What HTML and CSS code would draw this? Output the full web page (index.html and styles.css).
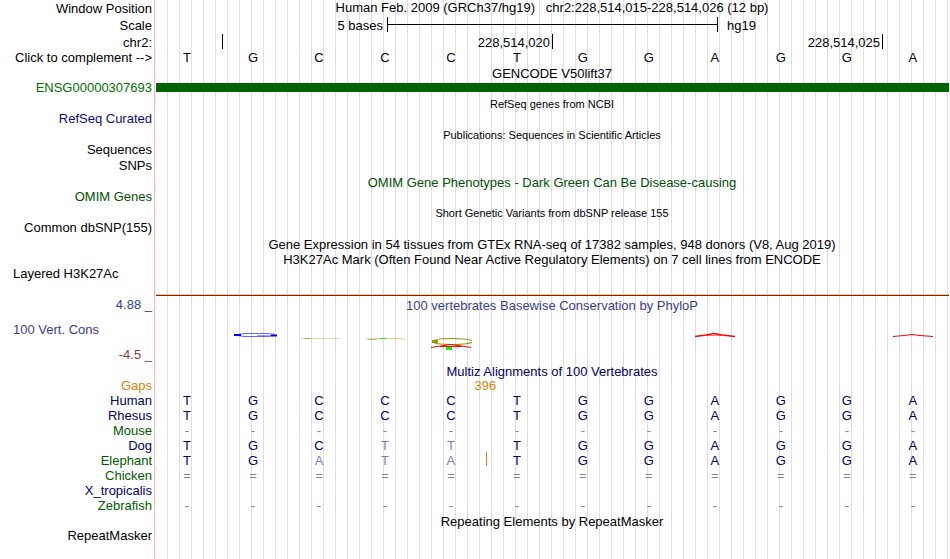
FILE: index.html
```
<!DOCTYPE html>
<html lang="en">
<head>
    <meta charset="UTF-8">
    <meta name="viewport" content="width=device-width, initial-scale=1.0">
    <title>Human chr2:228,514,015-228,514,026</title>
    <link rel="stylesheet" href="styles.css">
</head>
<body>

<table class="browser">
    <colgroup>
        <col class="col-label">
        <col span="12">
        <col class="col-end">
    </colgroup>
    <tbody>
        <!-- position and ruler -->
        <tr class="ruler">
            <th>Window Position</th>
            <td colspan="13" class="title position">Human Feb. 2009 (GRCh37/hg19) &nbsp; chr2:228,514,015-228,514,026 (12 bp)</td>
        </tr>
        <tr class="ruler">
            <th>Scale</th>
            <td colspan="13">
                <div class="scale">
                    <span class="scale-size">5 bases</span>
                    <span class="scale-bar"></span>
                    <span class="scale-db">hg19</span>
                </div>
            </td>
        </tr>
        <tr class="ruler">
            <th>chr2:</th>
            <td colspan="13">
                <div class="ticks">
                    <span class="tick"></span>
                    <span class="tick">228,514,020</span>
                    <span class="tick">228,514,025</span>
                </div>
            </td>
        </tr>
        <tr class="bases sequence">
            <th>Click to complement --&gt;</th>
            <td>T</td><td>G</td><td>C</td><td>C</td><td>C</td><td>T</td><td>G</td><td>G</td><td>A</td><td>G</td><td>G</td><td>A</td><td></td>
        </tr>

        <!-- genes -->
        <tr>
            <th></th>
            <td colspan="13" class="title">GENCODE V50lift37</td>
        </tr>
        <tr>
            <th class="gene">ENSG00000307693</th>
            <td colspan="13"><div class="gene-bar"></div></td>
        </tr>
        <tr class="tall">
            <th></th>
            <td colspan="13" class="title small">RefSeq genes from NCBI</td>
        </tr>
        <tr>
            <th class="refseq">RefSeq Curated</th>
            <td colspan="13"></td>
        </tr>
        <tr class="tall">
            <th></th>
            <td colspan="13" class="title small">Publications: Sequences in Scientific Articles</td>
        </tr>
        <tr>
            <th>Sequences</th>
            <td colspan="13"></td>
        </tr>
        <tr class="tall">
            <th>SNPs</th>
            <td colspan="13"></td>
        </tr>
        <tr class="tall">
            <th></th>
            <td colspan="13" class="title omim">OMIM Gene Phenotypes - Dark Green Can Be Disease-causing</td>
        </tr>
        <tr>
            <th class="omim">OMIM Genes</th>
            <td colspan="13"></td>
        </tr>
        <tr class="tall">
            <th></th>
            <td colspan="13" class="title small">Short Genetic Variants from dbSNP release 155</td>
        </tr>
        <tr>
            <th>Common dbSNP(155)</th>
            <td colspan="13"></td>
        </tr>
        <tr class="tall">
            <th></th>
            <td colspan="13" class="title">Gene Expression in 54 tissues from GTEx RNA-seq of 17382 samples, 948 donors (V8, Aug 2019)</td>
        </tr>
        <tr>
            <th></th>
            <td colspan="13" class="title">H3K27Ac Mark (Often Found Near Active Regulatory Elements) on 7 cell lines from ENCODE</td>
        </tr>
        <tr class="signal">
            <th class="left">Layered H3K27Ac</th>
            <td colspan="13"><div class="signal-line"></div></td>
        </tr>

        <!-- conservation -->
        <tr>
            <th class="cons">4.88 _</th>
            <td colspan="13" class="title cons">100 vertebrates Basewise Conservation by PhyloP</td>
        </tr>
        <tr class="wiggle">
            <th class="left cons">100 Vert. Cons</th>
            <td colspan="13" rowspan="2">
                <svg class="logo" viewBox="0 0 796 50" preserveAspectRatio="none" aria-hidden="true">
                    <g fill="none" stroke="#0000ff">
                        <path d="M84 21.5L90 20.5H115L121 21.5M84 22.5L90 23.5H115L119 22.5" stroke-opacity="0.6"/>
                        <path d="M103 22.5H119" stroke-opacity="0.4"/>
                        <path d="M80 22H87M117 22.5H123" stroke-width="2"/>
                    </g>
                    <path d="M147 25.5H187" stroke="#999900" stroke-opacity="0.3"/>
                    <path d="M150 25.5H157" stroke="#999900" stroke-opacity="0.6"/>
                    <path d="M212 26L222 25.5H246L252 26.5" fill="none" stroke="#999900" stroke-opacity="0.4"/>
                    <path d="M214 26.5H223" stroke="#999900" stroke-opacity="0.6"/>
                    <path d="M226 25.5H232" stroke="#00ff00"/>
                    <path d="M318 27.5Q312 25.5 298 25.5Q279 25.5 279 28.5Q279 31.5 298 31.5Q312 31.5 318 29.5" fill="none" stroke="#999900" stroke-width="1.2"/>
                    <path d="M278 28.5H284" stroke="#999900" stroke-width="3"/>
                    <path d="M277 34.5L290 32.5L297 31.5L304 32.5L317 34.5M286 33.5H308" fill="none" stroke="#ff0000"/>
                    <path d="M292 35.5H298" stroke="#00ff00" stroke-width="3"/>
                    <path d="M541 23.5L552 22L560 20.5L568 22L581 23.5" fill="none" stroke="#ff0000" stroke-width="1.5"/>
                    <path d="M553 22.5H568" stroke="#ff0000" stroke-opacity="0.5"/>
                    <path d="M739 23.5L750 22.5L758 21.5L766 22.5L779 23.5" fill="none" stroke="#ff0000"/>
                </svg>
            </td>
        </tr>
        <tr>
            <th class="cons-min">-4.5 _</th>
        </tr>

        <!-- alignments -->
        <tr class="tall">
            <th></th>
            <td colspan="13" class="title align">Multiz Alignments of 100 Vertebrates</td>
        </tr>
        <tr class="bases">
            <th class="gaps">Gaps</th>
            <td colspan="4"></td><td colspan="2" class="gaps">396</td><td colspan="7"></td>
        </tr>
        <tr class="bases">
            <th class="align">Human</th>
            <td>T</td><td>G</td><td>C</td><td>C</td><td>C</td><td>T</td><td>G</td><td>G</td><td>A</td><td>G</td><td>G</td><td>A</td><td></td>
        </tr>
        <tr class="bases">
            <th class="align">Rhesus</th>
            <td>T</td><td>G</td><td>C</td><td>C</td><td>C</td><td>T</td><td>G</td><td>G</td><td>A</td><td>G</td><td>G</td><td>A</td><td></td>
        </tr>
        <tr class="bases unaligned">
            <th class="align-alt">Mouse</th>
            <td>-</td><td>-</td><td>-</td><td>-</td><td>-</td><td>-</td><td>-</td><td>-</td><td>-</td><td>-</td><td>-</td><td>-</td><td></td>
        </tr>
        <tr class="bases">
            <th class="align">Dog</th>
            <td>T</td><td>G</td><td>C</td><td class="diff">T</td><td class="diff">T</td><td>T</td><td>G</td><td>G</td><td>A</td><td>G</td><td>G</td><td>A</td><td></td>
        </tr>
        <tr class="bases">
            <th class="align-alt">Elephant</th>
            <td>T</td><td>G</td><td class="diff">A</td><td class="diff">T</td><td class="diff">A</td><td class="insert">T</td><td>G</td><td>G</td><td>A</td><td>G</td><td>G</td><td>A</td><td></td>
        </tr>
        <tr class="bases unaligned">
            <th class="align-alt">Chicken</th>
            <td>=</td><td>=</td><td>=</td><td>=</td><td>=</td><td>=</td><td>=</td><td>=</td><td>=</td><td>=</td><td>=</td><td>=</td><td></td>
        </tr>
        <tr>
            <th class="align">X_tropicalis</th>
            <td colspan="13"></td>
        </tr>
        <tr class="bases unaligned">
            <th class="align-alt">Zebrafish</th>
            <td>-</td><td>-</td><td>-</td><td>-</td><td>-</td><td>-</td><td>-</td><td>-</td><td>-</td><td>-</td><td>-</td><td>-</td><td></td>
        </tr>

        <!-- repeats -->
        <tr>
            <th></th>
            <td colspan="13" class="title">Repeating Elements by RepeatMasker</td>
        </tr>
        <tr class="last">
            <th>RepeatMasker</th>
            <td colspan="13"></td>
        </tr>
    </tbody>
</table>

</body>
</html>
```
FILE: styles.css
```
body {
    margin: 0;
    background-color: white;
    color: black;
    font-family: "Liberation Sans", Arial, sans-serif;
    font-size: 13px;
}
.browser {
    width: 100%;
    table-layout: fixed;
    border-collapse: collapse;
    /* pink divider after the labels, then a guide line every 12px */
    background-image:
        linear-gradient(#ffb4b4, #ffb4b4),
        repeating-linear-gradient(to right, #dcdcf8 0, #dcdcf8 1px, transparent 1px, transparent 12px);
    background-size: 1px 100%, auto;
    background-position: 154px 0, 167px 0;
    background-repeat: no-repeat;
}
.col-label {
    width: 154px;
}
.col-end {
    width: 4px;
}
tr {
    height: 15px;
    line-height: 15px;
}
th, td {
    padding: 0;
    vertical-align: top;
    white-space: nowrap;
}
th {
    padding-right: 2px;
    font-weight: normal;
    line-height: 13px;
    text-align: right;
}
.tall {
    height: 16px;
}
.tall th {
    line-height: 15px;
}
.tall .title {
    padding-top: 1px;
}
.ruler, .ruler th {
    height: 17px;
    line-height: 17px;
}
.ruler .position {
    line-height: 15px;
}
.left {
    padding-left: 13px;
    text-align: left;
}
.title {
    text-align: center;
}
.small {
    font-size: 11px;
}

/* ruler */
.scale {
    display: grid;
    grid-template-columns: 233fr 331fr 232fr;
}
.scale-size {
    padding-right: 4px;
    text-align: right;
}
.scale-bar {
    height: 15px;
    box-sizing: border-box;
    border-left: 1px solid black;
    border-right: 1px solid black;
    background: linear-gradient(black, black) 0 7px / 100% 1px no-repeat;
}
.scale-db {
    padding-left: 9px;
}
.ticks {
    display: grid;
    grid-template-columns: 69fr 330fr 330fr 67fr;
}
.tick {
    height: 15px;
    padding-right: 2px;
    border-right: 1px solid black;
    text-align: right;
}

/* genes */
.gene {
    color: #007000;
}
.gene-bar {
    height: 9px;
    margin: 2px 1px 0 2px;
    background-color: #006400;
}
.refseq {
    color: #0c0c78;
}
.omim {
    color: #005000;
}

/* histone mark */
.signal {
    height: 31px;
}
.signal-line {
    height: 1px;
    margin: 27px 1px 0 2px;
    border-top: 1px solid #ffc864;
    background-color: #7c2020;
}

/* conservation */
.cons {
    color: #3c3c8c;
}
.cons-min {
    color: #8c3c3c;
}
.wiggle {
    height: 35px;
}
.wiggle th {
    line-height: 33px;
}
.logo {
    display: block;
    width: 100%;
    height: 50px;
}

/* alignments */
.bases td {
    color: #000064;
    line-height: 13px;
    text-align: center;
}
.bases.sequence td {
    color: black;
}
.align {
    color: #000064;
}
.align-alt {
    color: #005a00;
}
.bases.unaligned td, .bases .diff {
    color: #8080b0;
}
.bases .gaps {
    color: #e08200;
}
.bases td.gaps {
    padding-left: 3px;
}
.insert {
    position: relative;
}
.insert::before {
    content: "";
    position: absolute;
    top: -2px;
    left: 2px;
    width: 1px;
    height: 14px;
    background-color: #e08200;
}
.last {
    height: 30px;
}
```
